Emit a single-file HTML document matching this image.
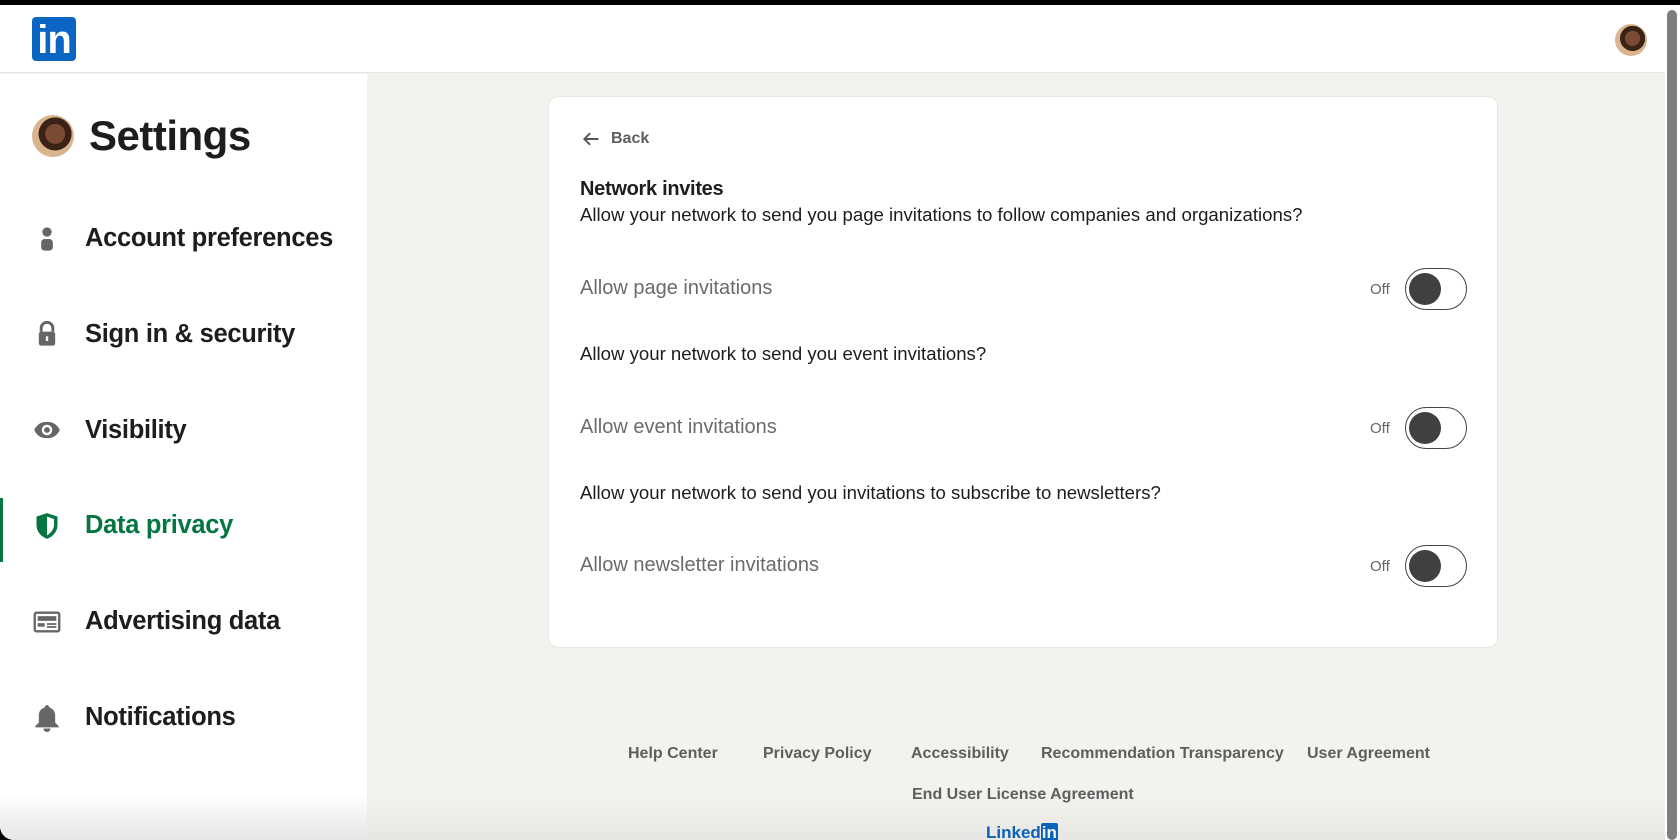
<!DOCTYPE html>
<html><head><meta charset="utf-8"><style>
*{margin:0;padding:0;box-sizing:border-box}
body{width:1680px;height:840px;overflow:hidden;background:#000;font-family:"Liberation Sans",Arial,sans-serif;position:relative}
.win{position:absolute;left:0;top:5px;width:1680px;height:835px;background:#f4f2ee;border-radius:0 0 0 14px;overflow:hidden}
.hdr{position:absolute;left:0;top:0;width:1680px;height:68px;background:#fff;border-bottom:1px solid #e6e6e6}
.side{position:absolute;left:0;top:69px;width:367px;height:780px;background:#fff}
.abs{position:absolute;white-space:nowrap}
.nav{position:absolute;left:85px;font-size:25.5px;font-weight:700;color:#1d1d1d;letter-spacing:-0.3px}
.ic{position:absolute;left:33px}
.card{position:absolute;left:548px;top:91px;width:950px;height:552px;background:#fff;border-radius:10px;border:1px solid #e8e6e2}
.q{position:absolute;left:31px;font-size:18.6px;color:#1d1d1d}
.lab{position:absolute;left:31px;font-size:20px;color:#6b6b6b}
.off{position:absolute;left:821px;font-size:15px;color:#666}
.tg{position:absolute;left:856px;width:62px;height:42px;border:1.5px solid #444;border-radius:21px}
.tg:after{content:"";position:absolute;left:3px;top:4px;width:32px;height:32px;border-radius:50%;background:#404040}
.ft{position:absolute;font-size:16px;font-weight:700;color:#5e5e5e;white-space:nowrap}
.av{border-radius:50%;background:radial-gradient(circle at 55% 45%,#7a4a32 0 30%,#3a2216 31% 50%,#d8b58e 51%)}
</style></head><body>
<div class="win">
<div class="hdr">
  <div class="abs" style="left:32px;top:12px;width:44px;height:44px;background:#0a66c2;border-radius:4px;color:#fff;font-weight:700;font-size:40px;line-height:46px;text-align:center;letter-spacing:-1px">in</div>
  <div class="abs av" style="left:1615px;top:19px;width:32px;height:32px"></div>
</div>
<div class="side">
  <div class="abs av" style="left:32px;top:41px;width:42px;height:42px"></div>
  <div class="abs" style="left:89px;top:38px;font-size:42px;font-weight:700;color:#1d1d1d;letter-spacing:-0.5px">Settings</div>

  <svg class="ic" style="top:151px" width="28" height="28" viewBox="0 0 24 24"><circle cx="12" cy="6" r="4" fill="#666"/><rect x="7" y="12" width="10" height="10" rx="3" fill="#666"/></svg>
  <div class="nav" style="top:150px">Account preferences</div>

  <svg class="ic" style="top:246px" width="28" height="28" viewBox="0 0 24 24"><path d="M7 10V7a5 5 0 0110 0v3" stroke="#666" stroke-width="2.5" fill="none"/><rect x="5" y="10" width="14" height="12" rx="2" fill="#666"/><rect x="11" y="14" width="2" height="4" fill="#fff"/></svg>
  <div class="nav" style="top:246px">Sign in &amp; security</div>

  <svg class="ic" style="top:342px" width="28" height="28" viewBox="0 0 24 24"><path d="M1 12C4 6 8 5 12 5s8 1 11 7c-3 6-7 7-11 7S4 18 1 12z" fill="#666"/><circle cx="12" cy="12" r="4.5" fill="#fff"/><circle cx="12" cy="12" r="2.5" fill="#666"/></svg>
  <div class="nav" style="top:342px">Visibility</div>

  <div class="abs" style="left:0;top:424px;width:3px;height:64px;background:#057642"></div>
  <svg class="ic" style="top:438px" width="28" height="28" viewBox="0 0 24 24"><path d="M12 1L3 4v7c0 6 4 10 9 12 5-2 9-6 9-12V4z" fill="#057642"/><path d="M12 4l6 2v5c0 4-3 7-6 9z" fill="#fff"/></svg>
  <div class="nav" style="top:437px;color:#057642">Data privacy</div>

  <svg class="ic" style="top:534px" width="28" height="28" viewBox="0 0 24 24"><rect x="1.5" y="4" width="21" height="16" rx="1.5" fill="none" stroke="#666" stroke-width="2"/><rect x="4" y="7" width="16" height="4" fill="#666"/><rect x="4" y="13" width="6" height="3" fill="#666"/><rect x="12" y="13" width="8" height="1.5" fill="#666"/><rect x="12" y="15.5" width="8" height="1.5" fill="#666"/></svg>
  <div class="nav" style="top:533px">Advertising data</div>

  <svg class="ic" style="top:630px" width="28" height="28" viewBox="0 0 24 24"><path d="M12 1a2 2 0 012 2c3 1 5 3 5 7v6l3 3v1H2v-1l3-3v-6c0-4 2-6 5-7a2 2 0 012-2z" fill="#666"/><path d="M9 21h6a3 3 0 01-6 0z" fill="#666"/></svg>
  <div class="nav" style="top:629px">Notifications</div>
  <div class="abs" style="left:0;top:720px;width:367px;height:60px;background:linear-gradient(#fff,#eeeeee)"></div>
</div>

<div class="card">
  <svg class="abs" style="left:31px;top:32px" width="22" height="20" viewBox="0 0 24 24"><path d="M21 12H4M11 5l-7 7 7 7" stroke="#555" stroke-width="2.3" fill="none"/></svg>
  <div class="abs" style="left:62px;top:33px;font-size:16px;font-weight:700;color:#5e5e5e">Back</div>
  <div class="abs" style="left:31px;top:81px;font-size:20px;font-weight:700;color:#1d1d1d;letter-spacing:-0.3px">Network invites</div>
  <div class="q" style="top:107px">Allow your network to send you page invitations to follow companies and organizations?</div>
  <div class="lab" style="top:180px">Allow page invitations</div>
  <div class="off" style="top:184px">Off</div><div class="tg" style="top:171px"></div>
  <div class="q" style="top:246px">Allow your network to send you event invitations?</div>
  <div class="lab" style="top:319px">Allow event invitations</div>
  <div class="off" style="top:323px">Off</div><div class="tg" style="top:310px"></div>
  <div class="q" style="top:385px">Allow your network to send you invitations to subscribe to newsletters?</div>
  <div class="lab" style="top:457px">Allow newsletter invitations</div>
  <div class="off" style="top:461px">Off</div><div class="tg" style="top:448px"></div>
</div>

<div class="ft" style="left:628px;top:740px">Help Center</div>
<div class="ft" style="left:763px;top:740px">Privacy Policy</div>
<div class="ft" style="left:911px;top:740px">Accessibility</div>
<div class="ft" style="left:1041px;top:740px">Recommendation Transparency</div>
<div class="ft" style="left:1307px;top:740px">User Agreement</div>
<div class="ft" style="left:912px;top:781px">End User License Agreement</div>
<div class="abs" style="left:986px;top:818px;font-size:17px;font-weight:700;color:#0a66c2">Linked<span style="background:#0a66c2;color:#fff;padding:0 1px;border-radius:2px">in</span></div>
<div class="abs" style="left:0;top:790px;width:1680px;height:45px;background:linear-gradient(rgba(0,0,0,0),rgba(0,0,0,0.05))"></div>
<div class="abs" style="left:1665px;top:0;width:15px;height:835px;background:#fff"></div>
<div class="abs" style="left:1667px;top:5px;width:10px;height:830px;background:#7d7d7d;border-radius:5px"></div>
</div>
</body></html>
